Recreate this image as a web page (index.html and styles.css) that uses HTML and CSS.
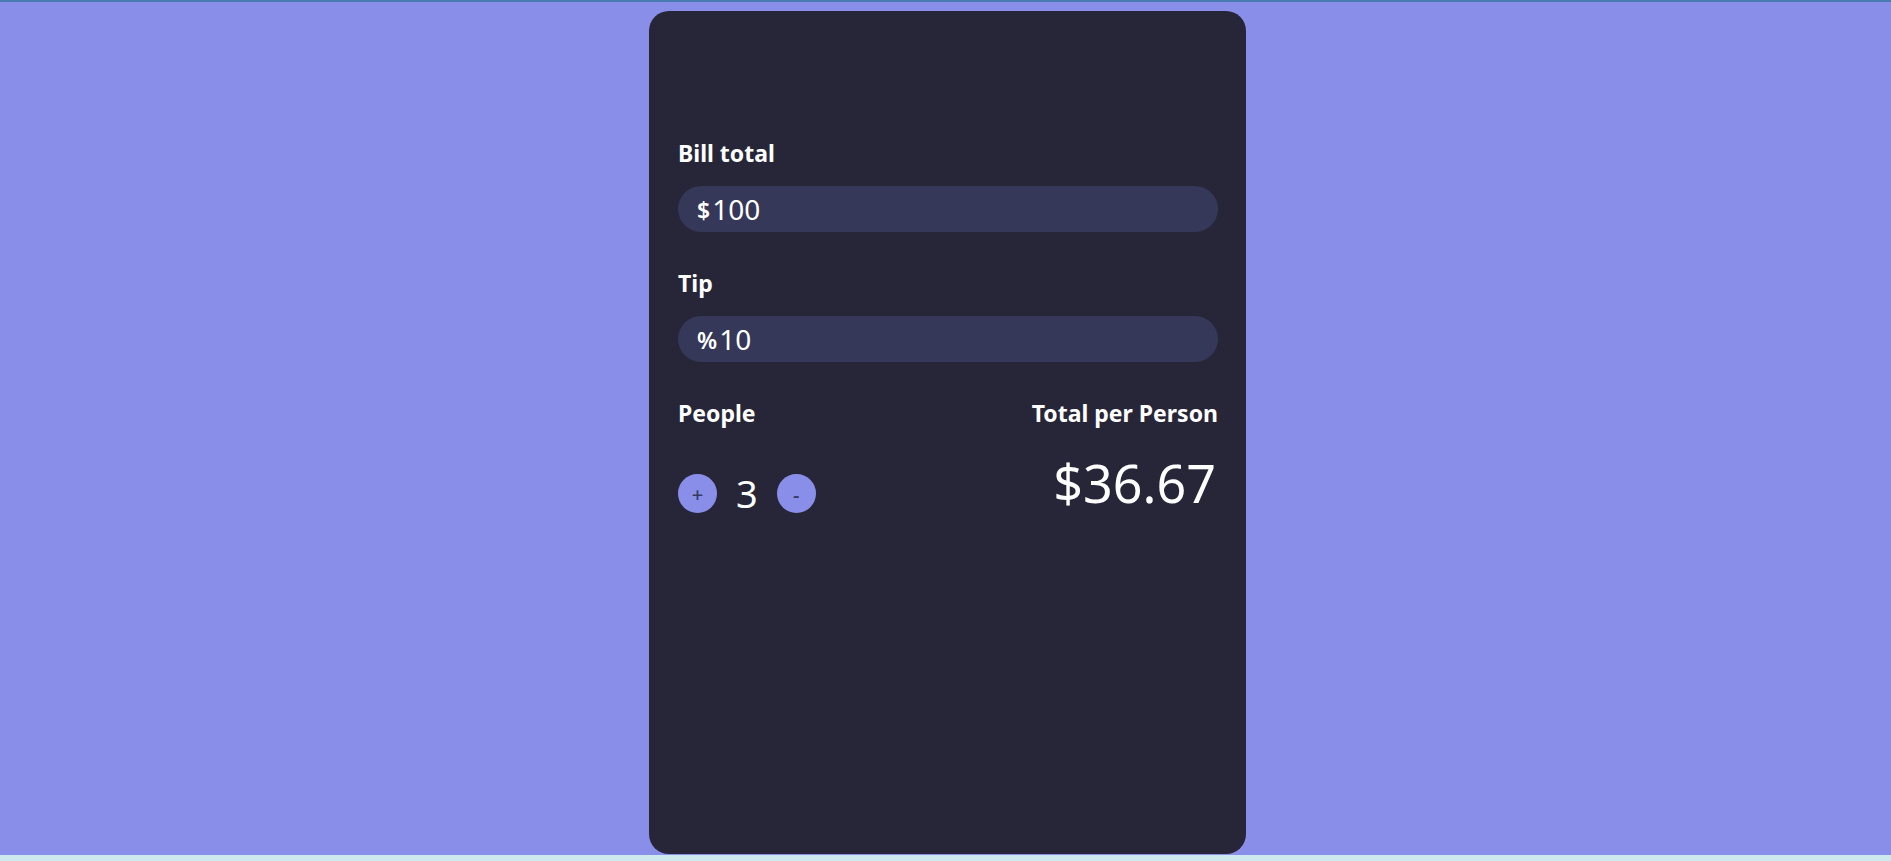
FILE: index.html
```html
<!DOCTYPE html>
<html lang="en">
<head>
<meta charset="utf-8">
<title>Tip Calculator</title>
<link rel="stylesheet" href="styles.css">
</head>
<body>
<div class="page">
  <main class="card">
    <div class="group">
      <label class="label" for="bill">Bill total</label>
      <div class="field">
        <span class="unit">$</span>
        <input id="bill" class="value" type="text" value="100">
      </div>
    </div>
    <div class="group">
      <label class="label" for="tip">Tip</label>
      <div class="field">
        <span class="unit">%</span>
        <input id="tip" class="value" type="text" value="10">
      </div>
    </div>
    <div class="bottom">
      <div class="col">
        <div class="label">People</div>
        <div class="counter">
          <button class="btn">+</button>
          <span class="count">3</span>
          <button class="btn">-</button>
        </div>
      </div>
      <div class="col col-right">
        <div class="label">Total per Person</div>
        <div class="total">$36.67</div>
      </div>
    </div>
  </main>
</div>
</body>
</html>
```

FILE: styles.css
```css
html {
  background: #cde9ed;
}
body {
  margin: 0;
  font-family: "Noto Sans", "DejaVu Sans", sans-serif;
  color: #ffffff;
}
.page {
  box-sizing: border-box;
  height: 855px;
  border-top: 2px solid #4a7bb0;
  background: #898fe9;
  padding-top: 9px;
  padding-left: 4px;
  display: flex;
  justify-content: center;
  align-items: flex-start;
}
.card {
  box-sizing: border-box;
  width: 597px;
  height: 843px;
  background: #272639;
  border-radius: 20px;
  padding: 126px 28px 0 29px;
  display: flex;
  flex-direction: column;
}
.group {
  display: flex;
  flex-direction: column;
  gap: 17px;
  margin-bottom: 35px;
}
.label {
  display: block;
  font-size: 23px;
  font-weight: 700;
  line-height: 32px;
  color: #ffffff;
}
.field {
  box-sizing: border-box;
  height: 46px;
  border-radius: 23px;
  background: #353858;
  display: flex;
  align-items: center;
  padding-left: 19px;
  gap: 2px;
}
.unit {
  font-size: 23px;
  font-weight: 600;
  line-height: 30px;
  padding-top: 1px;
}
.value {
  flex: 1;
  min-width: 0;
  border: none;
  outline: none;
  background: transparent;
  color: #ffffff;
  font-family: inherit;
  font-size: 28px;
  padding: 0;
  margin: 0;
  line-height: 38px;
  height: 38px;
}
.bottom {
  display: flex;
  justify-content: space-between;
}
.col {
  display: flex;
  flex-direction: column;
}
.col-right {
  align-items: flex-end;
}
.counter {
  margin-top: 42px;
  display: flex;
  align-items: center;
  gap: 19px;
}
.btn {
  width: 39px;
  height: 39px;
  border-radius: 50%;
  border: none;
  padding: 2px 0 0 0;
  background: #898fe9;
  color: #363a62;
  font-family: inherit;
  font-size: 20px;
  font-weight: 500;
  line-height: 37px;
  cursor: pointer;
}
.count {
  font-size: 38px;
  line-height: 44px;
}
.total {
  margin-top: 18px;
  font-size: 52px;
  line-height: 71px;
  padding-right: 2px;
}
```
